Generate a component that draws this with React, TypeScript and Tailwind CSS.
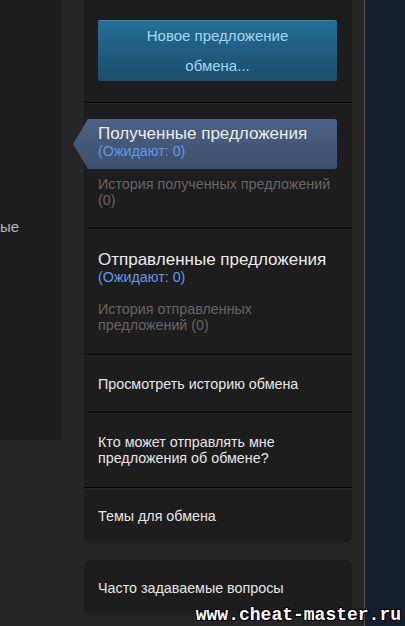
import React from "react";

const font = { fontFamily: '"Liberation Sans", Arial, sans-serif' };

function Divider() {
  return (
    <div>
      <div className="h-px bg-black" />
      <div className="h-px bg-[#272727]" />
    </div>
  );
}

function LinkSection({ children, bottom = "pb-5" }: { children: React.ReactNode; bottom?: string }) {
  return (
    <div className={`px-[14px] pt-5 text-[14.3px] leading-4 text-[#e6e6e6] ${bottom}`}>{children}</div>
  );
}

export default function App() {
  return (
    <div className="relative flex h-[626px] w-[405px] overflow-hidden bg-[#252525]" style={font}>
      {/* left content panel (cut off) */}
      <div className="h-[440px] w-[62px] shrink-0 bg-[#1d1d1d]">
        <div className="mt-[217px] whitespace-nowrap text-[15px] leading-5 text-[#b0bac4]">ые</div>
      </div>

      {/* right sidebar */}
      <div className="ml-[22px] flex w-[268px] shrink-0 flex-col gap-[17px]">
        <div className="rounded-b-md bg-[#1d1d1d]">
          <div className="px-[14px] pb-[21px] pt-5">
            <button className="flex h-[61px] w-[239px] flex-col items-center justify-center rounded-[2px] border-t border-[#3a8bb8] bg-gradient-to-b from-[#246f96] to-[#1a4c6a] text-[15px] leading-[30px] text-[#a3d6f5]">
              <span>Новое предложение</span>
              <span>обмена...</span>
            </button>
          </div>
          <Divider />

          <div className="pb-5 pt-[15px]">
            <div className="relative -ml-[11px] mr-[15px] flex h-[50px]">
              <svg width="15" height="50" viewBox="0 0 15 50" className="shrink-0">
                <defs>
                  <linearGradient id="tabg" x1="0" y1="0" x2="0" y2="1">
                    <stop offset="0" stopColor="#4c6385" />
                    <stop offset="1" stopColor="#3c4e6d" />
                  </linearGradient>
                </defs>
                <polygon points="15,0 15,50 0,25" fill="url(#tabg)" />
              </svg>
              <div className="flex-1 rounded-r-[3px] bg-gradient-to-b from-[#4c6385] to-[#3c4e6d] pl-[10px] pt-[5px]">
                <div className="text-[17px] leading-[19px] text-[#ececec]">Полученные предложения</div>
                <div className="text-[14.3px] leading-4 text-[#5d9be8]">(Ожидают: 0)</div>
              </div>
            </div>
            <div className="mt-[7px] px-[14px] text-[14.3px] leading-4 text-[#666]">
              История полученных предложений (0)
            </div>
          </div>
          <Divider />

          <div className="px-[14px] pb-[21px] pt-5">
            <div className="text-[17px] leading-[19px] text-[#ececec]">Отправленные предложения</div>
            <div className="text-[14.3px] leading-4 text-[#5d9be8]">(Ожидают: 0)</div>
            <div className="mt-4 text-[14.3px] leading-4 text-[#666]">
              История отправленных предложений (0)
            </div>
          </div>
          <Divider />

          <LinkSection>Просмотреть историю обмена</LinkSection>
          <Divider />

          <LinkSection bottom="pb-[21px]">
            Кто может отправлять мне
            <br />
            предложения об обмене?
          </LinkSection>
          <Divider />

          <div className="px-[14px] pb-[19px] pt-[19px] text-[14.3px] leading-4 text-[#e6e6e6]">
            Темы для обмена
          </div>
        </div>

        <div className="rounded-md bg-[#1d1d1d] px-[14px] pb-[19px] pt-5 text-[14.3px] leading-4 text-[#e6e6e6]">
          Часто задаваемые вопросы
        </div>
      </div>

      {/* page edge */}
      <div className="ml-[12px] w-px shrink-0 bg-[#4f4f4f]" />
      <div className="flex-1 bg-[#16202d]" />

      {/* watermark */}
      <div
        className="absolute bottom-[1px] right-[4px] text-[18px] font-bold leading-5 text-white"
        style={{
          fontFamily: '"Liberation Mono", "Courier New", monospace',
          textShadow: "1px 1px 0 #000, -1px -1px 0 #000, 1px -1px 0 #000, -1px 1px 0 #000",
        }}
      >
        www.cheat-master.ru
      </div>
    </div>
  );
}
